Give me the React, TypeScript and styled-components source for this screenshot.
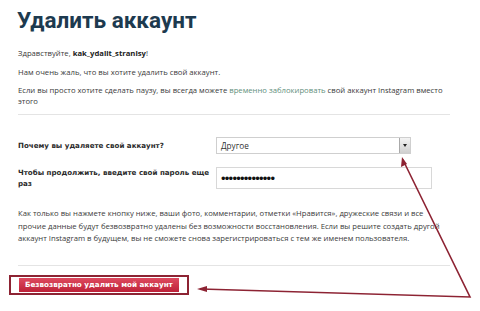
import React from "react";
import styled, { createGlobalStyle } from "styled-components";

const Global = createGlobalStyle`
  html, body { margin: 0; padding: 0; background: #fff; }
  body { width: 480px; height: 311px; overflow: hidden; }
`;

const Page = styled.div`
  position: relative;
  width: 480px;
  height: 311px;
  box-sizing: border-box;
  padding: 6px 30px 0 18px;
  font-family: "Open Sans", "Liberation Sans", sans-serif;
  font-size: 7.7px;
  color: #3a3a3a;
`;

const Title = styled.h1`
  margin: 0 0 0 -1px;
  font-family: Roboto, "Liberation Sans", sans-serif;
  font-weight: 700;
  font-size: 22.5px;
  line-height: 28px;
  color: #1d3a4f;
`;

const Para = styled.p<{ $mt: number }>`
  margin: ${(p) => p.$mt}px 0 0;
  line-height: 11px;
  width: 440px;
`;

const Strong = styled.b`
  color: #222;
`;

const Link = styled.span`
  color: #5f8f7d;
`;

const Divider = styled.hr<{ $mt: number }>`
  margin: ${(p) => p.$mt}px 0 0;
  border: 0;
  border-top: 1px solid #e4e4e4;
  width: 432px;
`;

const FormGrid = styled.div`
  display: grid;
  grid-template-columns: 198px auto;
  row-gap: 13px;
  margin-top: 22px;
  align-items: center;
`;

const Label = styled.div`
  font-family: "DejaVu Sans", sans-serif;
  font-weight: 700;
  font-size: 7.1px;
  line-height: 11px;
  color: #2a2a2a;
`;

const Select = styled.div`
  position: relative;
  width: 195px;
  height: 17px;
  box-sizing: border-box;
  border: 1px solid #cfcfcf;
  background: #fff;
  display: flex;
  align-items: center;
  padding-left: 4px;
  font-size: 8.2px;
  color: #333;
`;

const SelectArrow = styled.div`
  position: absolute;
  right: 0;
  top: 0;
  bottom: 0;
  width: 10px;
  background: linear-gradient(#f4f4f4, #cfcfcf);
  border-left: 1px solid #aaa;
  display: flex;
  align-items: center;
  justify-content: center;
  &::after {
    content: "";
    border-left: 2px solid transparent;
    border-right: 2px solid transparent;
    border-top: 3px solid #222;
  }
`;

const Input = styled.div`
  width: 216px;
  height: 22px;
  box-sizing: border-box;
  border: 1px solid #d8d8d8;
  display: flex;
  align-items: center;
  padding-left: 4px;
  font-family: "Liberation Sans", sans-serif;
  font-size: 13px;
  letter-spacing: -0.75px;
  color: #111;
`;

const Body = styled.p`
  margin: 18px 0 0;
  line-height: 12.5px;
  width: 425px;
`;

const Highlight = styled.div`
  margin: 9px 0 0 -9px;
  display: inline-flex;
  align-self: flex-start;
  border: 2px solid #8d2333;
  padding: 1px 8px;
  background: #fff;
`;

const DangerButton = styled.button`
  border: 0;
  margin: 0;
  height: 14px;
  padding: 0 6px;
  background: linear-gradient(#de4a5f, #bd2138);
  color: #fff;
  font-family: "DejaVu Sans", sans-serif;
  font-weight: 700;
  font-size: 7.2px;
  line-height: 14px;
  white-space: nowrap;
`;

const Overlay = styled.svg`
  position: absolute;
  inset: 0;
  pointer-events: none;
`;

const Column = styled.div`
  display: flex;
  flex-direction: column;
`;

export default function App() {
  return (
    <>
      <Global />
      <Page>
        <Column>
          <Title>Удалить аккаунт</Title>
          <Para $mt={14}>
            Здравствуйте, <Strong>kak_ydalit_stranisy</Strong>!
          </Para>
          <Para $mt={8}>Нам очень жаль, что вы хотите удалить свой аккаунт.</Para>
          <Para $mt={7}>
            Если вы просто хотите сделать паузу, вы всегда можете{" "}
            <Link>временно заблокировать</Link> свой аккаунт Instagram вместо
            <br />
            этого
          </Para>
          <Divider $mt={7} />
          <FormGrid>
            <Label>Почему вы удаляете свой аккаунт?</Label>
            <Select>
              Другое
              <SelectArrow />
            </Select>
            <Label>Чтобы продолжить, введите свой пароль еще раз</Label>
            <Input>••••••••••••••</Input>
          </FormGrid>
          <Body>
            Как только вы нажмете кнопку ниже, ваши фото, комментарии, отметки «Нравится», дружеские связи и все
            прочие данные будут безвозвратно удалены без возможности восстановления. Если вы решите создать другой
            аккаунт Instagram в будущем, вы не сможете снова зарегистрироваться с тем же именем пользователя.
          </Body>
          <Divider $mt={20} />
          <Highlight>
            <DangerButton>Безвозвратно удалить мой аккаунт</DangerButton>
          </Highlight>
        </Column>
        <Overlay width="480" height="311" viewBox="0 0 480 311">
          <g stroke="#8d2333" strokeWidth="1.6" fill="none" strokeLinecap="round">
            <polyline points="201,289 470,297 403,160" />
          </g>
          <g fill="#8d2333">
            <polygon points="197,289 207,286 207,292" />
            <polygon points="402,157 401,167 407,164" />
          </g>
        </Overlay>
      </Page>
    </>
  );
}
